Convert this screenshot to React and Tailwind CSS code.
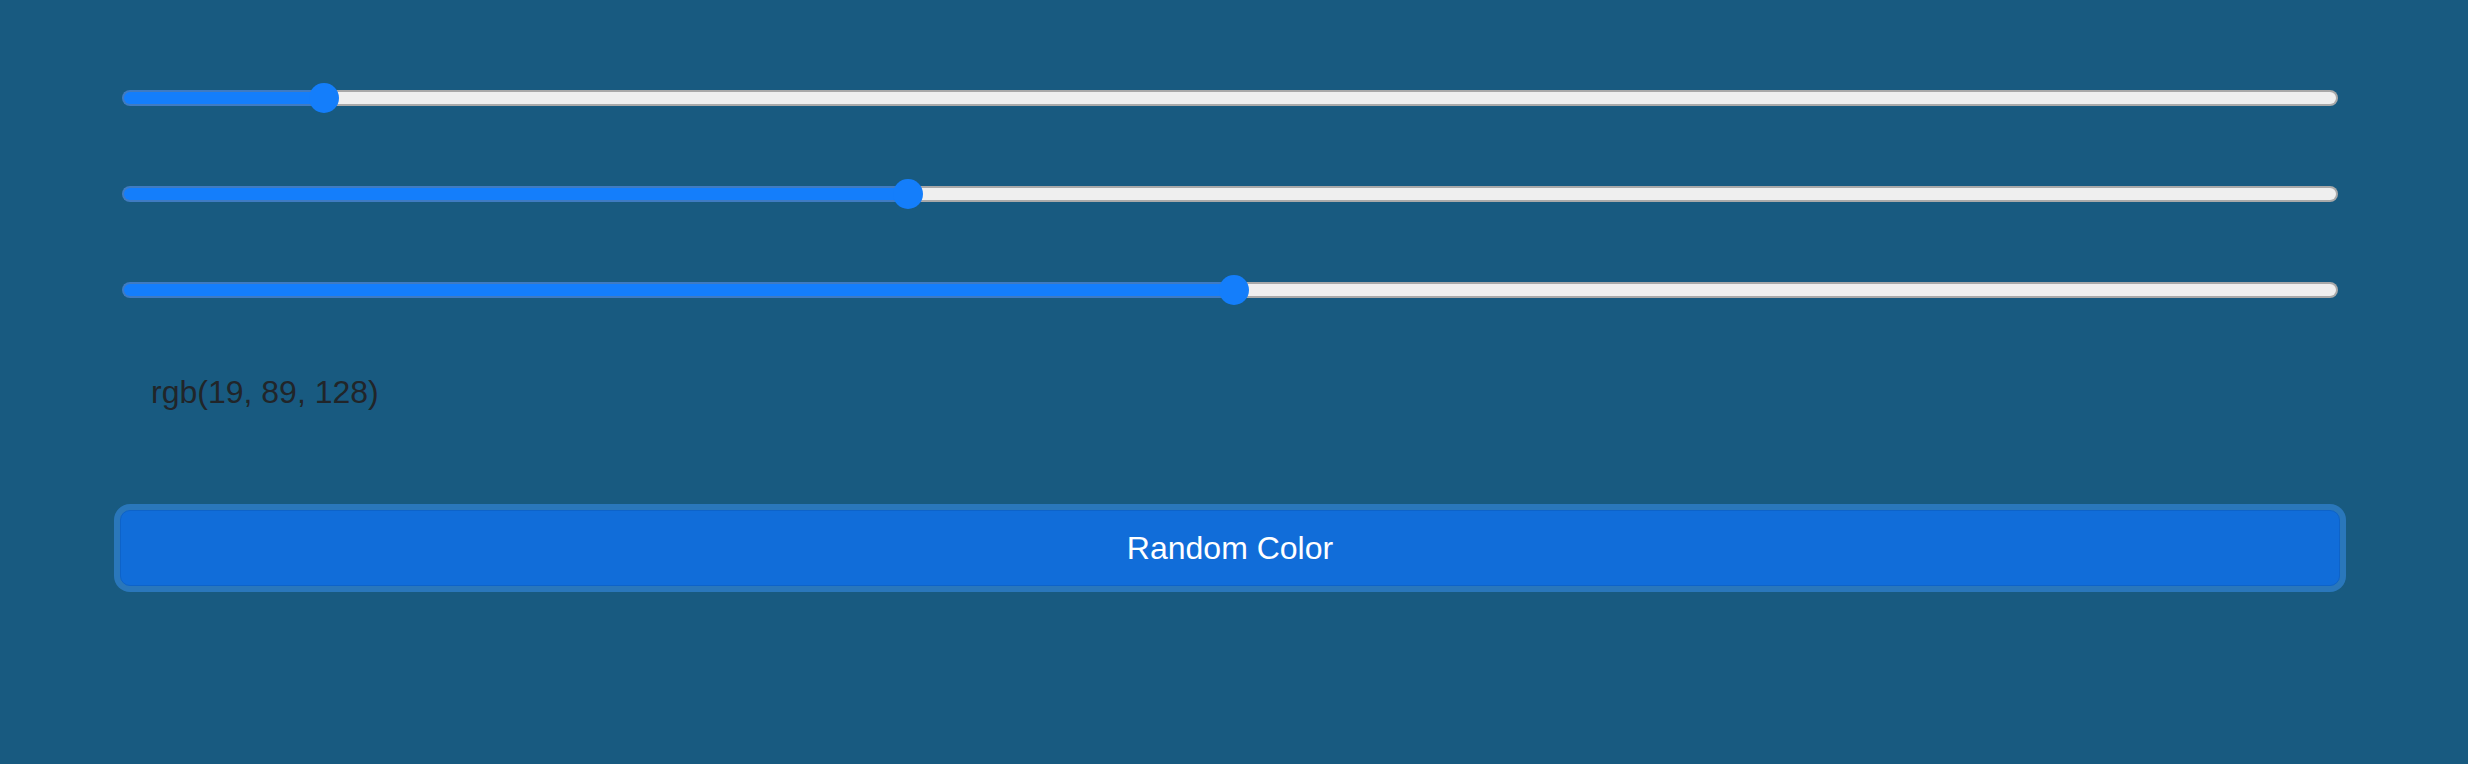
const sliders = [
  { name: 'red', value: 19, pos: 9.12 },
  { name: 'green', value: 89, pos: 35.49 },
  { name: 'blue', value: 128, pos: 50.2 },
];

function Slider({ pos }) {
  return (
    <div className="relative h-[32px] mx-[2px] flex items-center">
      <div className="flex w-full h-[16px]">
        <div
          className="h-full bg-[#147efb] border-2 border-[#3f7bc2] border-r-0 rounded-l-full"
          style={{ width: `${pos}%` }}
        />
        <div className="flex-1 h-full bg-[#efefef] border-2 border-[#a9a9a9] border-l-0 rounded-r-full" />
      </div>
      <div
        className="absolute top-px w-[30px] h-[30px] -translate-x-1/2 rounded-full bg-[#147efb]"
        style={{ left: `${pos}%` }}
      />
    </div>
  );
}

export default function App() {
  const [r, g, b] = sliders.map((s) => s.value);

  return (
    <div className="min-h-[764px] bg-[#185a80] pl-[120px] pr-[128px] pt-[82px] font-['Liberation_Sans',Arial,sans-serif]">
      <div className="flex flex-col gap-[64px]">
        {sliders.map((s) => (
          <Slider key={s.name} pos={s.pos} />
        ))}
      </div>

      <p className="mt-[62px] pl-[31px] text-[32px] leading-[48px] text-[#212529]">
        rgb({r}, {g}, {b})
      </p>

      <button className="mt-[94px] w-full h-[76px] rounded-[10px] bg-[#116dd9] border border-[#0e63c8] text-white text-[32px] leading-[48px] shadow-[0_0_0_6px_#2a77bb]">
        Random Color
      </button>
    </div>
  );
}
